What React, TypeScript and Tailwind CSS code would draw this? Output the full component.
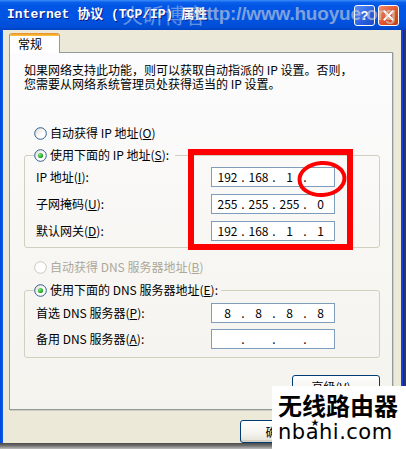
import React from "react";

const CJK = '"Noto Sans CJK SC", "Noto Sans", sans-serif';

function Radio({ checked, disabled }: { checked?: boolean; disabled?: boolean }) {
  return (
    <svg width="13" height="13" viewBox="0 0 13 13" className="shrink-0">
      <defs>
        <linearGradient id="rfill" x1="0" y1="0" x2="1" y2="1">
          <stop offset="0" stopColor="#DCD9CF" />
          <stop offset="0.6" stopColor="#FFFFFF" />
          <stop offset="1" stopColor="#FFFFFF" />
        </linearGradient>
        <radialGradient id="rdot" cx="0.35" cy="0.35" r="0.7">
          <stop offset="0" stopColor="#7BE57B" />
          <stop offset="1" stopColor="#1E9A1E" />
        </radialGradient>
      </defs>
      <circle
        cx="6.5"
        cy="6.5"
        r="5.8"
        fill={disabled ? "#FFFFFF" : "url(#rfill)"}
        stroke={disabled ? "#CAC8BB" : "#2F5F8F"}
        strokeWidth="1"
      />
      {checked && <circle cx="6.5" cy="6.5" r="2.6" fill="url(#rdot)" />}
    </svg>
  );
}

function U({ c }: { c: string }) {
  return <span className="underline underline-offset-[1px]">{c}</span>;
}

function IpBox({ parts }: { parts: string[] }) {
  return (
    <div className="w-[124px] h-[20px] border border-[#7F9DB9] bg-white flex items-center pl-[2px] text-[12px] leading-[14px] text-black">
      {parts.map((p, i) => (
        <React.Fragment key={i}>
          {i > 0 && <span className="w-[4px] text-center">.</span>}
          <span className="w-[27px] text-center">{p}</span>
        </React.Fragment>
      ))}
    </div>
  );
}

function Row({ label, parts }: { label: React.ReactNode; parts: string[] }) {
  return (
    <div className="flex items-center h-[20px]">
      <div className="w-[175px] text-[12px] leading-[14px]">{label}</div>
      <IpBox parts={parts} />
    </div>
  );
}

function XpButton({ children, className = "" }: { children: React.ReactNode; className?: string }) {
  return (
    <div
      className={
        "h-[23px] rounded-[3px] border border-[#003C74] bg-[linear-gradient(to_bottom,#FFFFFF_0%,#F4F3EE_60%,#E3E1D6_100%)] shadow-[inset_0_-2px_0_#D6D0C5] flex items-center justify-center text-[12px] leading-[14px] text-black " +
        className
      }
    >
      {children}
    </div>
  );
}

export default function App() {
  return (
    <div
      className="relative w-[406px] h-[449px] overflow-hidden bg-white flex flex-col text-black"
      style={{ fontFamily: CJK }}
    >
      {/* Title bar */}
      <div className="relative h-[30px] shrink-0 flex items-center pl-[7px] pr-[7px] bg-[linear-gradient(to_bottom,#3C8CF7_0%,#0A5FEA_8%,#0055E5_20%,#0054E3_60%,#004DD6_90%,#0042C0_100%)]">
        <div
          className="text-[13px] leading-[16px] font-bold text-white whitespace-pre [text-shadow:1px_1px_0_#0A1883]"
          style={{ fontFamily: '"Liberation Mono", "Noto Sans CJK SC", monospace' }}
        >
          Internet 协议 (TCP/IP) 属性
        </div>
        <div className="ml-auto flex items-center gap-[3px]">
          <div className="w-[21px] h-[21px] rounded-[3px] border border-white bg-[linear-gradient(135deg,#5B8FF5_0%,#2A5FE0_60%,#1D49C4_100%)] flex items-center justify-center text-white text-[13px] font-bold leading-none" style={{ fontFamily: '"Liberation Sans", sans-serif' }}>
            ?
          </div>
          <div className="w-[21px] h-[21px] rounded-[3px] border border-white bg-[linear-gradient(135deg,#F08A6A_0%,#E0542C_55%,#C23A14_100%)] flex items-center justify-center">
            <svg width="11" height="11" viewBox="0 0 11 11">
              <path d="M1.5 1.5 L9.5 9.5 M9.5 1.5 L1.5 9.5" stroke="#FFFFFF" strokeWidth="2" strokeLinecap="square" />
            </svg>
          </div>
        </div>
        {/* watermarks */}
        <div
          className="absolute left-[122px] top-[2px] text-[21px] leading-[24px] text-[rgba(230,230,230,0.45)] whitespace-nowrap"
          style={{ fontFamily: CJK }}
        >
          火昕博客
        </div>
        <div
          className="absolute left-[195px] top-[3px] text-[19px] leading-[22px] font-bold text-[rgba(215,215,215,0.6)] whitespace-nowrap tracking-[-0.2px]"
          style={{ fontFamily: '"Liberation Sans", sans-serif' }}
        >
          http://www.huoyue.org
        </div>
      </div>

      {/* Body */}
      <div className="flex flex-1 min-h-0">
        <div className="w-[3px] bg-[linear-gradient(to_right,#0046D8,#0A5FEA)]" />
        <div className="flex-1 bg-[#ECE9D8] pt-[3px] pl-[6px] flex flex-col">
          {/* tab */}
          <div className="relative z-10 w-[51px] h-[20px] -mb-[1px] bg-white border-x border-[#919B9C] rounded-t-[3px] overflow-hidden flex flex-col">
            <div className="h-[3px] bg-[linear-gradient(to_bottom,#E68B2C,#FFC73C)]" />
            <div className="pl-[8px] pt-[1px] text-[12px] leading-[14px]">常规</div>
          </div>
          {/* panel */}
          <div className="w-[384px] h-[358px] border border-[#919B9C] bg-[linear-gradient(to_bottom,#FCFCFE_0%,#F8F7F4_50%,#F4F3EE_100%)] shadow-[1px_1px_0_#D0CDBE] pl-[14px] pr-[12px] pt-[10px] flex flex-col">
            <div className="text-[12px] leading-[14px]">
              <div>如果网络支持此功能，则可以获取自动指派的 IP 设置。否则，</div>
              <div>您需要从网络系统管理员处获得适当的 IP 设置。</div>
            </div>

            <div className="mt-[35px] h-[14px] ml-[10px] flex items-center gap-[3px] text-[12px] leading-[14px]">
              <Radio />
              <span>
                自动获得 IP 地址(<U c="O" />)
              </span>
            </div>

            <fieldset className="mt-[8px] border border-[#D0D0BF] rounded-[3px] p-0">
              <legend className="ml-[9px] pr-[3px] p-0">
                <div className="h-[14px] flex items-center gap-[3px] text-[12px] leading-[14px] pr-[3px]">
                  <Radio checked />
                  <span>
                    使用下面的 IP 地址(<U c="S" />):
                  </span>
                </div>
              </legend>
              <div className="flex flex-col gap-[7px] pl-[11px] pt-[5px] pb-[6px]">
                <Row label={<>IP 地址(<U c="I" />):</>} parts={["192", "168", "1", ""]} />
                <Row label={<>子网掩码(<U c="U" />):</>} parts={["255", "255", "255", "0"]} />
                <Row label={<>默认网关(<U c="D" />):</>} parts={["192", "168", "1", "1"]} />
              </div>
            </fieldset>

            <div className="mt-[12px] h-[14px] ml-[10px] flex items-center gap-[3px] text-[12px] leading-[14px] text-[#ACA899]">
              <Radio disabled />
              <span>
                自动获得 DNS 服务器地址(<U c="B" />)
              </span>
            </div>

            <fieldset className="mt-[9px] border border-[#D0D0BF] rounded-[3px] p-0">
              <legend className="ml-[9px] p-0">
                <div className="h-[14px] flex items-center gap-[3px] text-[12px] leading-[14px] pr-[3px]">
                  <Radio checked />
                  <span>
                    使用下面的 DNS 服务器地址(<U c="E" />):
                  </span>
                </div>
              </legend>
              <div className="flex flex-col gap-[6px] pl-[11px] pt-[6px] pb-[8px]">
                <Row label={<>首选 DNS 服务器(<U c="P" />):</>} parts={["8", "8", "8", "8"]} />
                <Row label={<>备用 DNS 服务器(<U c="A" />):</>} parts={["", "", "", ""]} />
              </div>
            </fieldset>

            <div className="mt-[17px] flex justify-end">
              <XpButton className="w-[88px]">
                <span>
                  高级(<U c="V" />)...
                </span>
              </XpButton>
            </div>
          </div>

          {/* bottom buttons */}
          <div className="mt-[10px] flex pl-[231px] gap-[3px]">
            <XpButton className="w-[75px]">确定</XpButton>
            <XpButton className="w-[75px]">取消</XpButton>
          </div>
        </div>
        <div className="w-[5px] flex">
          <div className="w-[2px] bg-[#1A3FD0]" />
          <div className="w-[3px] bg-[linear-gradient(to_right,#0A2A9A,#3A3A55)]" />
        </div>
      </div>
      <div className="h-[6px] shrink-0 bg-[linear-gradient(to_bottom,#4A4A4A_0%,#6A6A6A_40%,#BDBDBD_100%)]" />

      {/* Annotations */}
      <div className="absolute left-[188px] top-[149px] w-[165px] h-[101px] border-[6px] border-[#FF0000]" />
      <svg className="absolute left-[296px] top-[159px]" width="52" height="40" viewBox="0 0 52 40">
        <ellipse cx="26" cy="20" rx="22.5" ry="16" fill="none" stroke="#FF0000" strokeWidth="4" transform="rotate(-4 26 20)" />
      </svg>

      {/* Logo overlay */}
      <div className="absolute left-[272px] top-[386px] w-[134px] h-[63px] bg-white">
        <div
          className="absolute left-[6px] top-[6px] text-[24px] leading-[26px] font-bold text-black whitespace-nowrap"
          style={{ fontFamily: CJK }}
        >
          无线路由器
        </div>
        <div
          className="absolute left-[6px] top-[36px] text-[21px] leading-[21px] text-black whitespace-nowrap tracking-[0.5px]"
          style={{ fontFamily: '"DejaVu Sans", sans-serif' }}
        >
          nbahi.com
        </div>
        <div className="absolute left-[39px] top-[32px] text-[8px] leading-[8px] text-black">★</div>
      </div>
    </div>
  );
}
